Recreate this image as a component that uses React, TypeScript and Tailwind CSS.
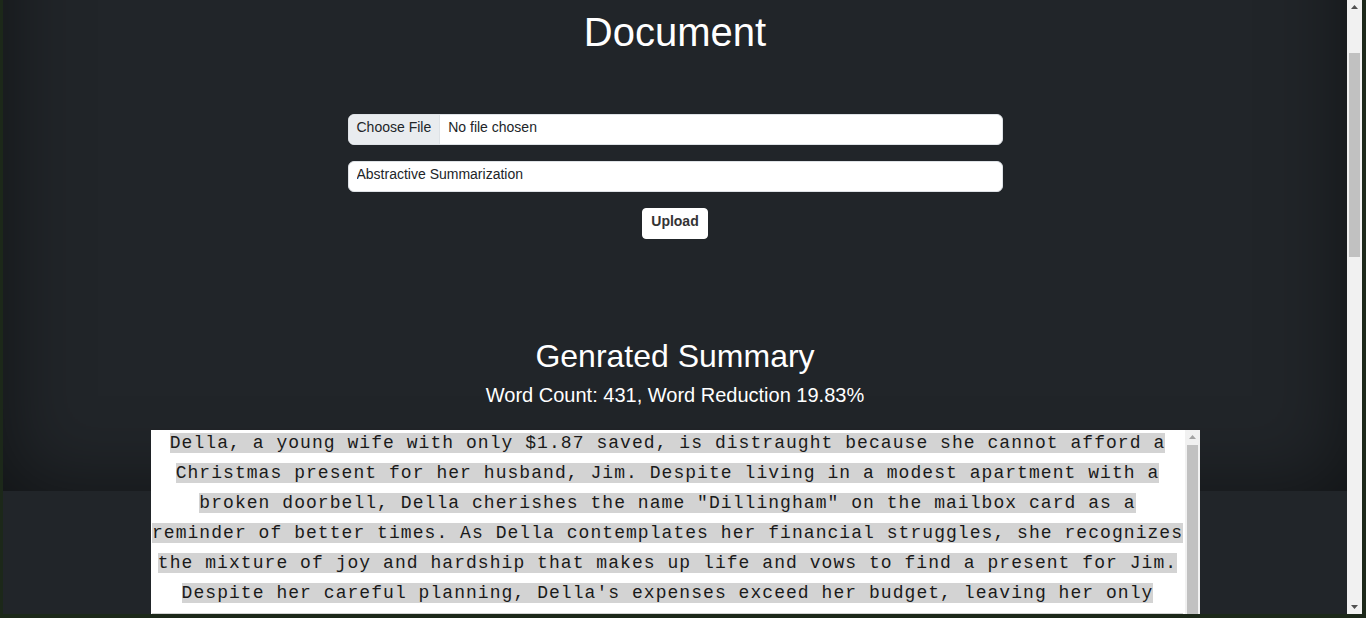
import { useCallback } from 'react';

const summary =
  'Della, a young wife with only $1.87 saved, is distraught because she cannot afford a Christmas present for her husband, Jim. Despite living in a modest apartment with a broken doorbell, Della cherishes the name "Dillingham" on the mailbox card as a reminder of better times. As Della contemplates her financial struggles, she recognizes the mixture of joy and hardship that makes up life and vows to find a present for Jim. Despite her careful planning, Della\'s expenses exceed her budget, leaving her only $1.87 to buy a gift for the man she loves. She stands before the pier-glass and decides to sell her beautiful long hair to Madame Sofronie for twenty dollars. With the money she searches the stores and finds a simple platinum fob chain for Jim\'s prized gold watch. When Jim comes home he stares at her short hair, and reveals that he sold his watch to buy her a set of combs.';

const Arrow = ({ down = false, color }: { down?: boolean; color: string }) => (
  <svg width="15" height="15" viewBox="0 0 15 15" className="block">
    <polygon
      points={down ? '4,6 11,6 7.5,10' : '4,9 11,9 7.5,5'}
      fill={color}
    />
  </svg>
);

// headless chrome hides real scrollbars, so draw the classic ones
const FakeScrollbar = ({
  thumbTop,
  thumbHeight,
  arrowColor,
}: {
  thumbTop: number;
  thumbHeight: number;
  arrowColor: string;
}) => (
  <div className="flex h-full w-[15px] shrink-0 flex-col bg-[#f1f1f1]">
    <Arrow color={arrowColor} />
    <div className="flex-1 px-[2px]">
      <div
        className="w-full bg-[#c1c1c1]"
        style={{ marginTop: thumbTop, height: thumbHeight }}
      />
    </div>
    <Arrow down color={arrowColor} />
  </div>
);

export default function App() {
  // page is shown scrolled a little, like the reference
  const scrollRef = useCallback((el: HTMLDivElement | null) => {
    if (el) el.scrollTop = 112;
  }, []);

  return (
    <div className="flex h-[618px] w-full overflow-hidden border-l-[3px] border-r-[4px] border-b-[4px] border-[#1c2819] bg-[#212529]">
      <div
        ref={scrollRef}
        className="h-full flex-1 overflow-y-scroll [scrollbar-width:none]"
      >
        <div className="min-h-[1752px] bg-[#212529] font-['Liberation_Sans',Arial,sans-serif]">
          {/* Hero */}
          <section className="h-[603px] bg-[#212529] pt-[120px] shadow-[inset_0_0_5rem_rgba(0,0,0,0.5)]">
            <h1 className="text-center text-[40px] leading-[48px] text-white">Document</h1>

            <form className="mx-auto mt-[58px] w-[655px]" onSubmit={(e) => e.preventDefault()}>
              <label className="flex h-[31px] cursor-pointer overflow-hidden rounded-[6px] border border-[#dee2e6] bg-white text-[14px] leading-[21px] text-[#212529]">
                <span className="border-r border-[#dee2e6] bg-[#e9ecef] px-2 pt-[2px] pb-[6px]">Choose File</span>
                <span className="px-2 pt-[2px] pb-[6px]">No file chosen</span>
                <input type="file" className="hidden" />
              </label>

              <select className="mt-4 block h-[31px] w-full appearance-none rounded-[6px] border border-[#dee2e6] bg-white px-2 pt-[1px] pb-[5px] text-[14px] leading-[21px] text-[#212529] outline-none">
                <option>Abstractive Summarization</option>
                <option>Extractive Summarization</option>
              </select>

              <div className="mt-4 flex justify-center">
                <button
                  type="submit"
                  className="h-[31px] rounded-[4px] border border-white bg-white px-2 pb-[4px] text-[14px] font-bold leading-[21px] text-[#333]"
                >
                  Upload
                </button>
              </div>
            </form>

            <h2 className="mt-[98px] text-center text-[32px] leading-[38.4px] text-white">Genrated Summary</h2>
            <p className="mt-2 text-center text-[20px] leading-[24px] text-white">
              Word Count: 431, Word Reduction 19.83%
            </p>

            <div className="mx-auto mt-[23px] flex h-[360px] w-[1049px] bg-white">
              <div className="flex-1 overflow-hidden text-center font-['Liberation_Mono','Courier_New',monospace] text-[18px] leading-[30px] tracking-[1.05px] text-[#1a1a1a]">
                <span className="relative -top-[2px] bg-[#d3d3d3]">{summary}</span>
              </div>
              <FakeScrollbar thumbTop={0} thumbHeight={300} arrowColor="#a3a3a3" />
            </div>
          </section>
        </div>
      </div>
      <FakeScrollbar thumbTop={38} thumbHeight={204} arrowColor="#505050" />
    </div>
  );
}
